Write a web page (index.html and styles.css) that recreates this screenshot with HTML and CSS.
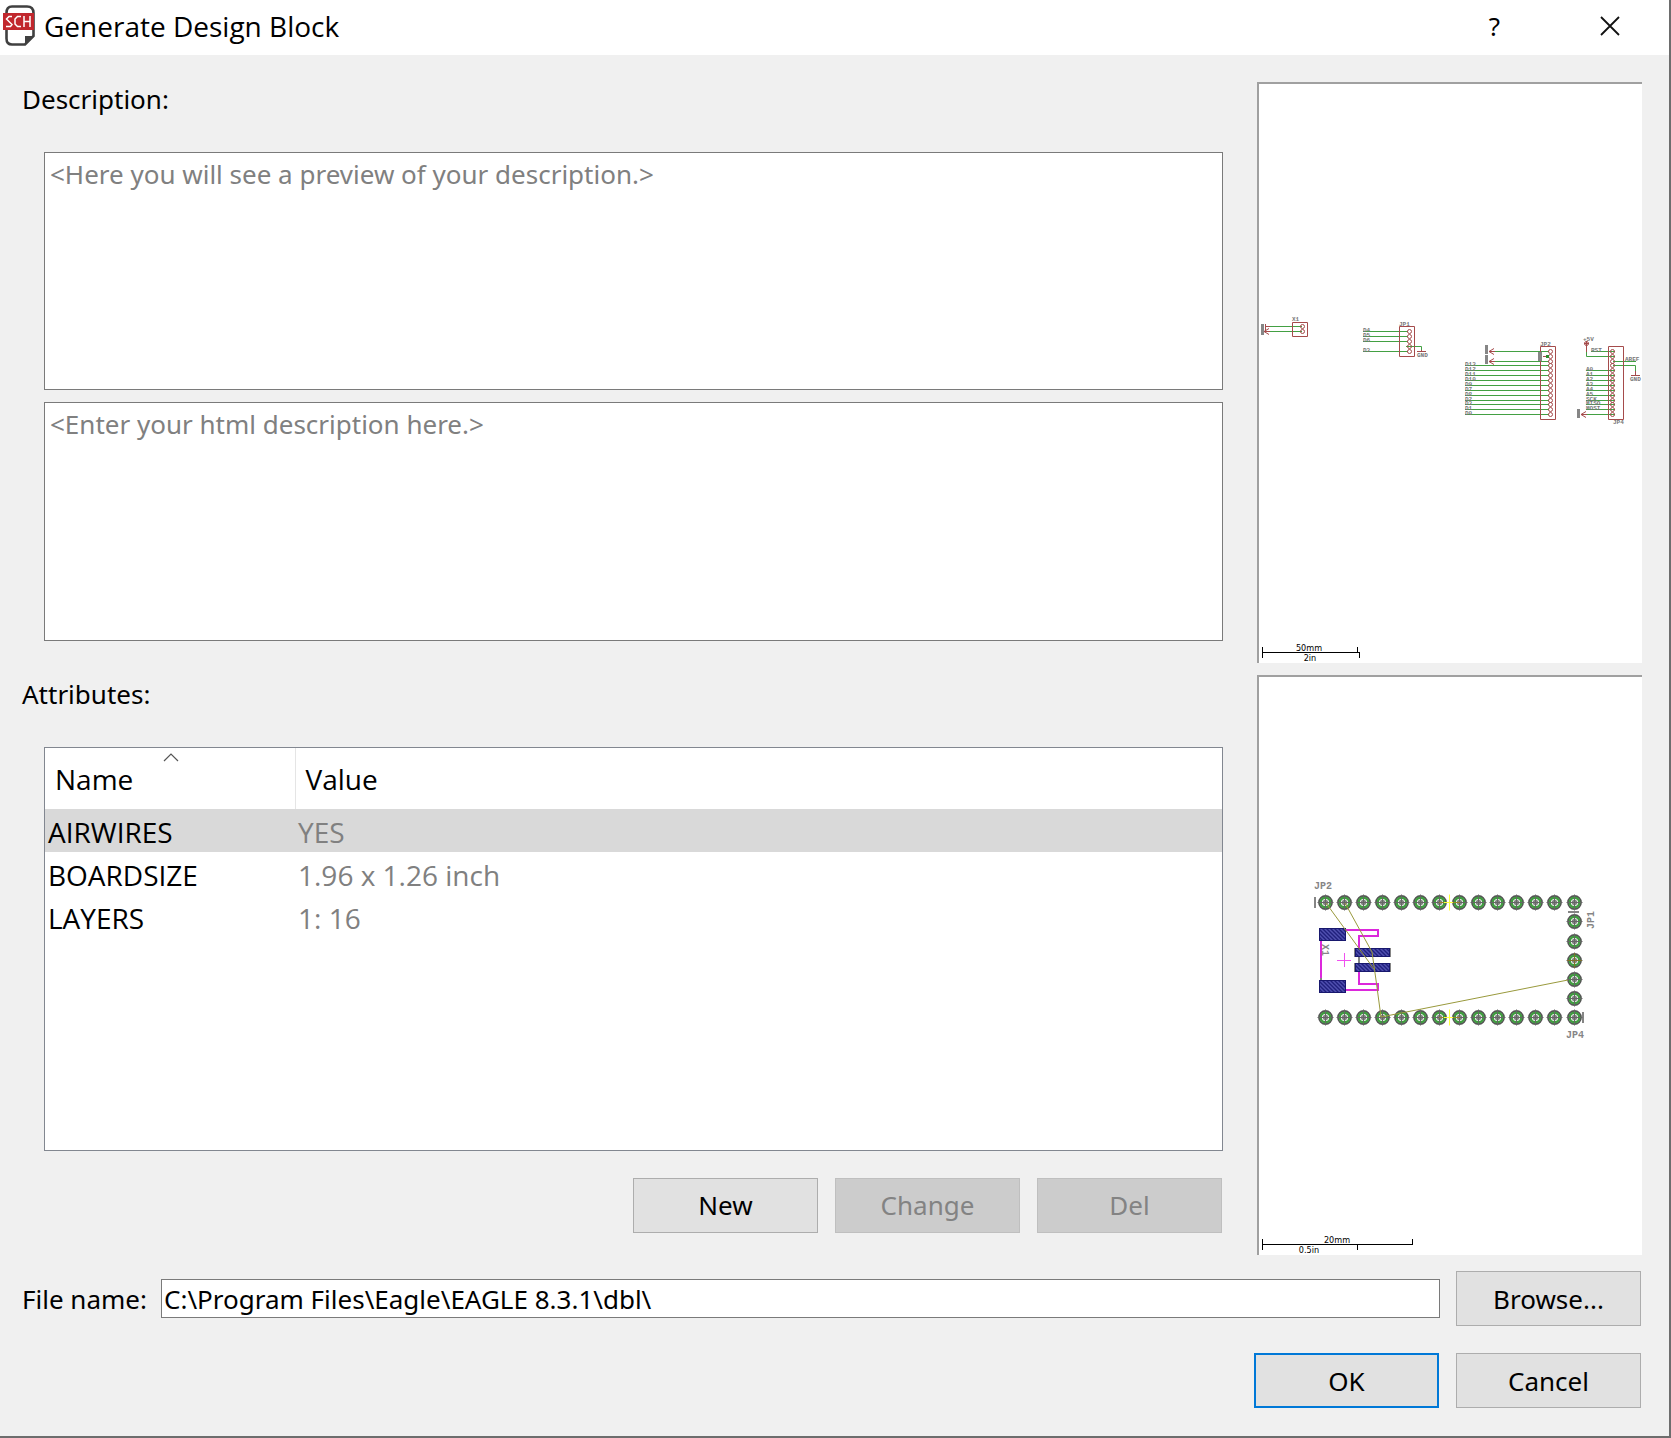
FILE: index.html
```html
<!DOCTYPE html>
<html lang="en">
<head>
<meta charset="utf-8">
<title>Generate Design Block</title>
<link rel="stylesheet" href="styles.css">
</head>
<body>
<div class="dialog">
  <header class="titlebar">
    <svg class="app-icon" viewBox="0 0 32 42" aria-hidden="true">
      <path d="M9 1.500H24Q30.500 1.500 30.500 8V31L22 39.500H9Q3.500 39.500 3.500 33.500V8Q3.500 1.500 9 1.500Z" fill="#fff" stroke="#404040" stroke-width="2.600"/>
      <path d="M22 40V31H31Z" fill="#404040"/>
      <rect x="0" y="8" width="31" height="17" fill="#c1272d"/>
      <path d="M9 11.500H6L3.500 14L9 19.500L7.500 21.500H3M18 11.500H14.500L12 14V19L14.500 21.500H18M21 11V22M27 11V22M21 16.500H27" fill="none" stroke="#fff" stroke-width="1.500"/>
    </svg>
    <h1 class="title">Generate Design Block</h1>
    <button class="caption-button" type="button" aria-label="Help">?</button>
    <button class="caption-button" type="button" aria-label="Close"><svg class="close-icon" viewBox="0 0 20 20"><path d="M1 1L19 19M19 1L1 19" stroke="#111" stroke-width="1.800"/></svg></button>
  </header>

  <main class="content">
    <section class="editor">
      <label class="label" for="html-description">Description:</label>
      <textarea class="memo memo-first" aria-label="Description preview" readonly placeholder="&lt;Here you will see a preview of your description.&gt;"></textarea>
      <textarea class="memo" id="html-description" placeholder="&lt;Enter your html description here.&gt;"></textarea>
      <h2 class="label label-attributes" id="attributes">Attributes:</h2>
      <div class="list">
        <table class="attributes" aria-labelledby="attributes">
          <thead>
            <tr>
              <th class="name-column">Name<svg class="sort-icon" viewBox="0 0 16 9"><path d="M1 8L8 1L15 8" fill="none" stroke="#555" stroke-width="1.200"/></svg></th>
              <th>Value</th>
            </tr>
          </thead>
          <tbody>
            <tr class="selected"><td>AIRWIRES</td><td>YES</td></tr>
            <tr><td>BOARDSIZE</td><td>1.96 x 1.26 inch</td></tr>
            <tr><td>LAYERS</td><td>1: 16</td></tr>
          </tbody>
        </table>
      </div>
      <div class="actions">
        <button class="button" type="button">New</button>
        <button class="button" type="button" disabled>Change</button>
        <button class="button" type="button" disabled>Del</button>
      </div>
    </section>

    <aside class="previews">
      <div class="preview">
        <svg class="drawing" viewBox="1259 84 383 574" preserveAspectRatio="xMinYMin" role="img" aria-label="Schematic preview">
          <defs>
            <g id="arrow"><path d="M5 -3L0 0L5 3M0 0H6" fill="none" stroke="#a54b4b"/></g>
          </defs>
          <g class="wire">
            <path d="M1265 326.500H1302M1265 331.500H1302"/>
            <path d="M1363 331.500H1408M1363 336.500H1408M1363 341.500H1408M1363 351.500H1408M1406 346.500H1421.500V350"/>
            <path d="M1490 351.500H1549M1490 361.500H1549"/>
            <path d="M1465 365.500H1549M1465 370.500H1549M1465 375.500H1549M1465 380.500H1549M1465 385.500H1549M1465 390.500H1549M1465 395.500H1549M1465 400.500H1549M1465 404.500H1549M1465 409.500H1549M1465 414.500H1549"/>
            <path d="M1591 351.500H1615M1586.500 351V356.500H1615M1613 361.500H1636M1613 365.500H1635.500V371"/>
            <path d="M1586 370.500H1615M1586 375.500H1615M1586 380.500H1615M1586 385.500H1615M1586 390.500H1615M1586 395.500H1615M1586 400.500H1615M1586 404.500H1615M1586 409.500H1615M1584 414.500H1615"/>
          </g>
          <g class="part">
            <path d="M1292.500 322.500H1307.500V336.500H1292.500ZM1399.500 326.500H1414.500V356.500H1399.500ZM1540.500 346.500H1555.500V419.500H1540.500ZM1608.500 346.500H1623.500V419.500H1608.500Z"/>
            <path d="M1265.500 324V332M1265 326.500H1270M1421.500 350V351.500M1417 351.500H1426M1543 356.500H1547M1586.500 341V352M1584 343.500H1589M1635.500 371V375.500M1631 375.500H1640"/>
            <circle cx="1586.500" cy="343.500" r="2"/>
            <g>
              <circle cx="1302.500" cy="326.500" r="2"/><circle cx="1302.500" cy="331.500" r="2"/>
              <circle cx="1409.500" cy="331.500" r="2"/><circle cx="1409.500" cy="336.500" r="2"/><circle cx="1409.500" cy="341.500" r="2"/><circle cx="1409.500" cy="346.500" r="2"/><circle cx="1409.500" cy="351.500" r="2"/>
            </g>
            <g id="pins">
              <circle cx="1550.500" cy="351.500" r="2"/><circle cx="1550.500" cy="356.500" r="2"/><circle cx="1550.500" cy="361.500" r="2"/><circle cx="1550.500" cy="365.500" r="2"/><circle cx="1550.500" cy="370.500" r="2"/><circle cx="1550.500" cy="375.500" r="2"/><circle cx="1550.500" cy="380.500" r="2"/><circle cx="1550.500" cy="385.500" r="2"/><circle cx="1550.500" cy="390.500" r="2"/><circle cx="1550.500" cy="395.500" r="2"/><circle cx="1550.500" cy="400.500" r="2"/><circle cx="1550.500" cy="404.500" r="2"/><circle cx="1550.500" cy="409.500" r="2"/><circle cx="1550.500" cy="414.500" r="2"/>
            </g>
            <use href="#pins" x="62"/>
          </g>
          <use href="#arrow" x="1264" y="331.500"/>
          <use href="#arrow" x="1489" y="351.500"/>
          <use href="#arrow" x="1489" y="361.500"/>
          <use href="#arrow" x="1581" y="414.500"/>
          <path fill="#868686" d="M1261 324H1264V335H1261ZM1485 345H1488V354H1485ZM1485 355H1488V364H1485ZM1577 409H1580V418H1577ZM1538 352H1542V361H1538Z"/>
          <rect x="1546" y="355" width="3" height="3" fill="#2d8b2d"/>
          <g class="net">
            <text x="1292" y="321">X1</text>
            <text x="1399" y="326">JP1</text><text x="1417" y="357">GND</text>
            <text x="1363" y="332">D4</text><text x="1363" y="337">D5</text><text x="1363" y="342">D6</text><text x="1363" y="352">D3</text>
            <text x="1540" y="346">JP2</text>
            <text x="1465" y="366">D13</text><text x="1465" y="371">D12</text><text x="1465" y="376">D11</text><text x="1465" y="381">D10</text><text x="1465" y="386">D9</text><text x="1465" y="391">D7</text><text x="1465" y="396">D8</text><text x="1465" y="401">D2</text><text x="1465" y="405">D3</text><text x="1465" y="410">D1</text><text x="1465" y="415">D0</text>
            <text x="1583" y="341">+5V</text><text x="1591" y="352">RST</text><text x="1625" y="361">AREF</text><text x="1630" y="381">GND</text>
            <text x="1586" y="371">A0</text><text x="1586" y="376">A1</text><text x="1586" y="381">A2</text><text x="1586" y="386">A3</text><text x="1586" y="391">A4</text><text x="1586" y="396">A5</text><text x="1586" y="401">SCK</text><text x="1586" y="405">MISO</text><text x="1586" y="410">MOSI</text>
            <text x="1613" y="424">JP4</text>
          </g>
          <path class="scale" d="M1262.500 647V658M1262 652.500H1360M1357.500 647V652M1359.500 652V658"/>
          <text class="scale-text" x="1309" y="651">50mm</text>
          <text class="scale-text" x="1310" y="661">2in</text>
        </svg>
      </div>
      <div class="preview">
        <svg class="drawing" viewBox="1259 677 383 574" preserveAspectRatio="xMinYMin" role="img" aria-label="Board preview">
          <defs>
            <g id="pad">
              <circle r="6.500" fill="#fff" stroke="#555" stroke-width="1.800"/>
              <circle r="4.800" fill="none" stroke="#3f9c3f" stroke-width="2.400"/>
              <circle r="2.800" fill="#858585"/>
              <path d="M-8 0H8M0 -8V8" stroke="#666" stroke-width="1"/>
            </g>
            <g id="row">
              <use href="#pad" x="1325.500"/><use href="#pad" x="1344.500"/><use href="#pad" x="1363.500"/><use href="#pad" x="1382.500"/><use href="#pad" x="1401.500"/><use href="#pad" x="1420.500"/><use href="#pad" x="1439.500"/><use href="#pad" x="1459.500"/><use href="#pad" x="1478.500"/><use href="#pad" x="1497.500"/><use href="#pad" x="1516.500"/><use href="#pad" x="1535.500"/><use href="#pad" x="1554.500"/><use href="#pad" x="1574.500"/>
              <path d="M1449.500 -8V8M1442 0H1457" stroke="#ffff3c"/>
              <path d="M1439 0H1444M1453 0H1460" stroke="#998030"/>
            </g>
            <pattern id="copper" width="4" height="4" patternUnits="userSpaceOnUse">
              <rect width="4" height="4" fill="#20207c"/>
              <path d="M-1 -1L5 5M-1 3L1 5M3 -1L5 1" stroke="#5050b0" stroke-width="1.400"/>
            </pattern>
          </defs>
          <path d="M1315 897V908M1583 1012V1023M1568 912H1579M1359 953V966M1321 975V981" stroke="#858585" stroke-width="2"/>
          <path d="M1321 941V978M1345 930H1378V936H1359V948M1359 971V984H1378V990H1345" fill="none" stroke="#dc28dc" stroke-width="2"/>
          <path d="M1337 960.500H1351M1344.500 953V967" stroke="#f050f0"/>
          <path fill="#858585" d="M1354 948H1391V957H1354ZM1354 963H1391V972H1354Z"/>
          <g fill="url(#copper)" stroke="#18186e">
            <rect x="1319.500" y="928.500" width="26" height="12"/>
            <rect x="1319.500" y="980.500" width="26" height="12"/>
            <rect x="1355.500" y="948.500" width="34" height="8"/>
            <rect x="1355.500" y="963.500" width="34" height="8"/>
          </g>
          <use href="#row" y="902.500"/>
          <use href="#row" y="1017.500"/>
          <use href="#pad" x="1574.500" y="921.500"/><use href="#pad" x="1574.500" y="941.500"/><use href="#pad" x="1574.500" y="960.500"/><use href="#pad" x="1574.500" y="979.500"/><use href="#pad" x="1574.500" y="998.500"/>
          <path d="M1567 960.500H1582M1574.500 953V968" stroke="#80702c"/>
          <path d="M1326 903L1374 969M1345 903L1372 952L1376 980L1381 1017L1568 980" fill="none" stroke="#99993c"/>
          <g class="designator">
            <text x="1314" y="889">JP2</text>
            <text x="1566" y="1038">JP4</text>
            <text transform="translate(1594 929) rotate(-90)">JP1</text>
            <text transform="translate(1322 944) rotate(90)">X1</text>
          </g>
          <path class="scale" d="M1262.500 1239V1250M1262 1244.500H1413M1412.500 1239V1244M1357.500 1244V1250"/>
          <text class="scale-text" x="1337" y="1243">20mm</text>
          <text class="scale-text" x="1309" y="1253">0.5in</text>
        </svg>
      </div>
    </aside>
  </main>

  <footer class="footer">
    <div class="file-row">
      <label class="label file-label" for="file-name">File name:</label>
      <input class="file-input" id="file-name" type="text" value="C:\Program Files\Eagle\EAGLE 8.3.1\dbl\">
      <button class="button" type="button">Browse...</button>
    </div>
    <div class="confirm-row">
      <button class="button button-default" type="submit">OK</button>
      <button class="button" type="button">Cancel</button>
    </div>
  </footer>
</div>
</body>
</html>
```
FILE: styles.css
```css
* { box-sizing: border-box; }

body {
  margin: 0;
  background: #f0f0f0;
  color: #000;
  font-family: "Noto Sans", "Open Sans", sans-serif;
  font-size: 26px;
  line-height: 34px;
}

button, input, textarea { font: inherit; color: inherit; border-radius: 0; }

.dialog {
  display: flex;
  flex-direction: column;
  min-height: 100vh;
  border-right: 2px solid #6d6d6d;
  border-bottom: 2px solid #6d6d6d;
}

.titlebar {
  display: flex;
  align-items: center;
  height: 55px;
  padding: 0 2px 4px 3px;
  background: #fff;
}
.app-icon { width: 32px; height: 42px; }
.title {
  flex: 1;
  margin: 0;
  padding-left: 9px;
  font-family: "Open Sans", sans-serif;
  font-size: 28px;
  font-weight: 400;
}
.caption-button {
  display: flex;
  align-items: center;
  justify-content: center;
  width: 115px;
  height: 50px;
  padding: 0;
  border: 0;
  background: none;
}
.close-icon { width: 20px; height: 20px; }

.content {
  flex: 1;
  display: grid;
  grid-template-columns: 1fr 385px;
  gap: 34px;
  padding: 27px 27px 0 22px;
}

.editor { display: flex; flex-direction: column; padding-bottom: 22px; }
.label { margin: 0; font-size: 26px; font-weight: 400; }
.label-attributes { margin-top: 36px; }
.memo {
  flex: 238 1 238px;
  min-height: 120px;
  margin: 12px 0 0 22px;
  padding: 4px 5px;
  border: 1px solid #7a7a7a;
  background: #fff;
  resize: none;
  outline: 0;
}
.memo-first { margin-top: 36px; }
.memo::placeholder { color: #808080; opacity: 1; }

.list {
  flex: 404 1 404px;
  margin: 36px 0 0 22px;
  border: 1px solid #828790;
  background: #fff;
}
.attributes {
  width: 100%;
  border-collapse: collapse;
  table-layout: fixed;
  font-family: "Open Sans", sans-serif;
  font-size: 28px;
}
.attributes th {
  position: relative;
  height: 61px;
  padding: 2px 10px 0;
  font-weight: 400;
  text-align: left;
}
.attributes .name-column { width: 250px; border-right: 1px solid #e5e5e5; }
.sort-icon {
  position: absolute;
  top: 5px;
  left: 118px;
  width: 16px;
  height: 9px;
}
.attributes td { height: 43px; padding: 3px 3px 0; }
.attributes td + td { color: #808080; }
.selected { background: #d9d9d9; }

.actions { display: flex; justify-content: flex-end; gap: 17px; padding-top: 27px; padding-right: 1px; }
.button {
  width: 185px;
  height: 55px;
  padding: 0;
  border: 1px solid #adadad;
  background: #e1e1e1;
}
.button:disabled { border-color: #bfbfbf; background: #ccc; color: #838383; }
.button-default { border: 2px solid #0078d7; }

.previews { display: grid; grid-template-rows: 1fr 1fr; gap: 12px; }
.preview {
  border: solid #a0a0a0;
  border-width: 2px 0 0 2px;
  background: #fff;
}
.drawing { display: block; width: 100%; height: 100%; }
.wire { fill: none; stroke: #43a043; }
.part { fill: none; stroke: #a54b4b; }
.net { fill: #777; font: bold 6px "Liberation Mono", monospace; }
.designator { fill: #858585; font: bold 10px "Liberation Mono", monospace; }
.scale { fill: none; stroke: #000; }
.scale-text { font: 9px "DejaVu Sans Condensed", "DejaVu Sans", sans-serif; text-anchor: middle; }

.footer { padding: 16px 28px 28px 22px; }
.file-row { display: flex; align-items: center; }
.file-label { width: 139px; }
.file-input {
  flex: 1;
  min-width: 0;
  height: 39px;
  margin-right: 16px;
  padding: 0 2px;
  border: 1px solid #7a7a7a;
  background: #fff;
  outline: 0;
}
.confirm-row { display: flex; justify-content: flex-end; gap: 17px; padding-top: 27px; }
```
